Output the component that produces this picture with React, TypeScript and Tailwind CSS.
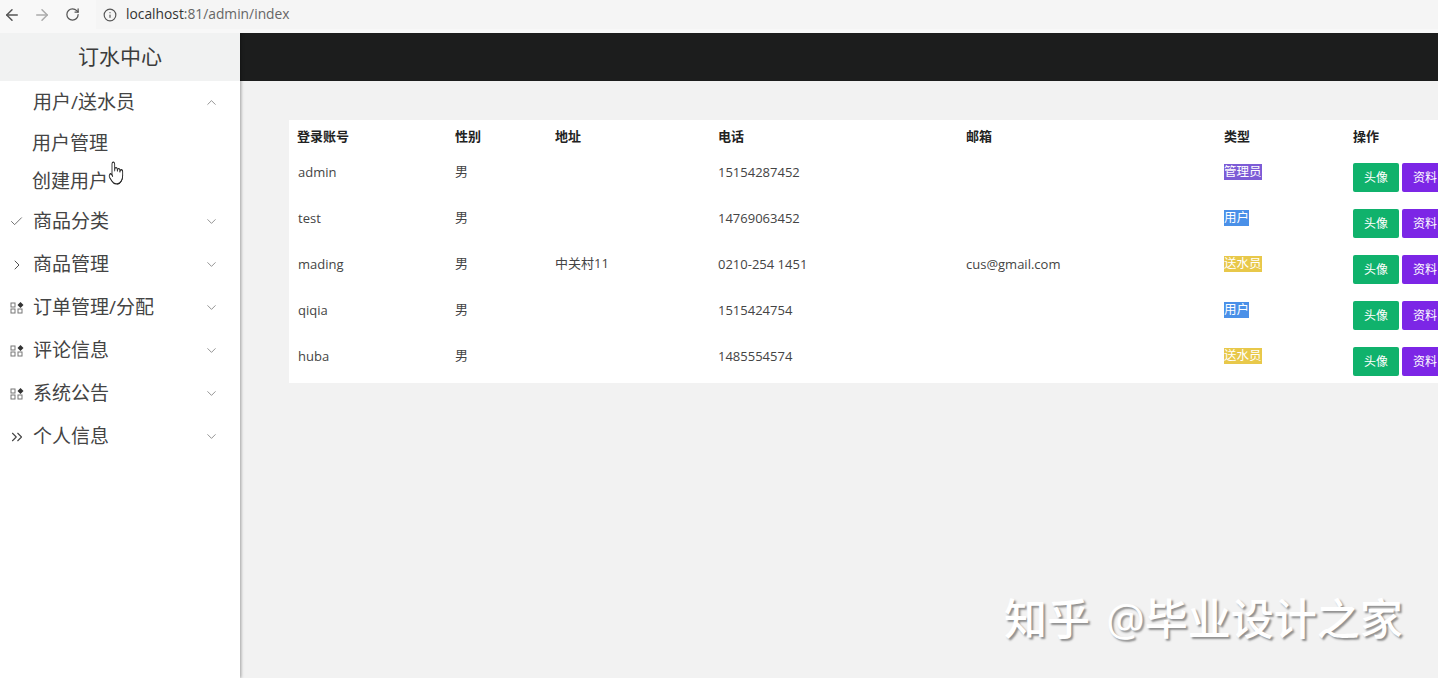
import { ArrowLeft, ArrowRight, Check, ChevronDown, ChevronRight, ChevronUp, ChevronsRight, Info, Pointer, RotateCw } from "lucide-react";
import type { ReactNode } from "react";

const font = "font-['Open_Sans','Noto_Sans_CJK_SC',sans-serif]";

function GridIcon() {
  return (
    <svg width="14" height="14" viewBox="0 0 14 14" fill="none" stroke="#777" strokeWidth="1">
      <rect x="1" y="2" width="4" height="4" />
      <rect x="1" y="8" width="4" height="4" />
      <rect x="8" y="8" width="4" height="4" />
      <path d="M10.5 1 13.5 4l-3 3-3-3z" fill="#333" stroke="none" />
    </svg>
  );
}

function NavItem({ icon, label, open }: { icon?: ReactNode; label: string; open?: boolean }) {
  return (
    <div className="flex h-[43px] items-center">
      <div className="flex w-[33px] justify-center text-[#444]">{icon}</div>
      <span className="flex-1 text-[19px] text-[#444]">{label}</span>
      {open ? (
        <ChevronUp size={15} strokeWidth={1} className="mr-[21px] text-[#555]" />
      ) : (
        <ChevronDown size={15} strokeWidth={1} className="mr-[21px] text-[#555]" />
      )}
    </div>
  );
}

const rows = [
  { name: "admin", addr: "", phone: "15154287452", mail: "", type: "管理员", color: "bg-[#7c5bd6]" },
  { name: "test", addr: "", phone: "14769063452", mail: "", type: "用户", color: "bg-[#4a90e8]" },
  { name: "mading", addr: "中关村11", phone: "0210-254 1451", mail: "cus@gmail.com", type: "送水员", color: "bg-[#e8c84a]" },
  { name: "qiqia", addr: "", phone: "1515424754", mail: "", type: "用户", color: "bg-[#4a90e8]" },
  { name: "huba", addr: "", phone: "1485554574", mail: "", type: "送水员", color: "bg-[#e8c84a]" },
];

const heads = ["登录账号", "性别", "地址", "电话", "邮箱", "类型", "操作"];

export default function App() {
  return (
    <div className={`flex h-[678px] w-[1438px] flex-col overflow-hidden bg-white ${font}`}>
      {/* browser bar */}
      <div className="flex h-[33px] items-center bg-[#f8f8f8] pb-[4px]">
        <ArrowLeft size={18} className="ml-[3px] text-[#555]" />
        <ArrowRight size={18} className="ml-[12px] text-[#aaa]" />
        <RotateCw size={15} className="ml-[14px] text-[#555]" />
        <div className="ml-[16px] flex h-[29px] flex-1 items-center bg-[#f5f5f5] pl-[7px]">
          <Info size={14} className="text-[#555]" />
          <span className="ml-[9px] text-[13.8px] text-[#666]">
            <span className="text-[#333]">localhost</span>:81/admin/index
          </span>
        </div>
      </div>

      <div className="flex flex-1 overflow-hidden">
        {/* sidebar */}
        <aside className="z-10 w-[240px] shrink-0 bg-white shadow-[1px_0_3px_rgba(0,0,0,0.35)]">
          <div className="flex h-[48px] items-center justify-center bg-[#f1f2f2] text-[21px] text-[#3c3c3c]">订水中心</div>
          <NavItem label="用户/送水员" open />
          <div className="flex h-[38px] items-center pl-[32px] text-[19px] text-[#444]">用户管理</div>
          <div className="flex h-[38px] items-center pl-[32px] text-[19px] text-[#444]">创建用户</div>
          <NavItem icon={<Check size={15} strokeWidth={1.2} />} label="商品分类" />
          <NavItem icon={<ChevronRight size={16} strokeWidth={1.4} />} label="商品管理" />
          <NavItem icon={<GridIcon />} label="订单管理/分配" />
          <NavItem icon={<GridIcon />} label="评论信息" />
          <NavItem icon={<GridIcon />} label="系统公告" />
          <NavItem icon={<ChevronsRight size={18} strokeWidth={1.5} />} label="个人信息" />
        </aside>

        {/* main */}
        <main className="relative flex min-w-0 flex-1 flex-col overflow-hidden bg-[#f2f2f2]">
          <div className="h-[48px] shrink-0 bg-[#1c1d1d]" />
          <div className="pl-[49px] pt-[39px]">
            <table className="w-[1200px] table-fixed border-collapse bg-white text-left text-[13px] text-[#444]">
              <colgroup>
                <col className="w-[158px]" />
                <col className="w-[100px]" />
                <col className="w-[163px]" />
                <col className="w-[248px]" />
                <col className="w-[258px]" />
                <col className="w-[129px]" />
                <col />
              </colgroup>
              <thead>
                <tr className="h-[33px]">
                  {heads.map((h) => (
                    <th key={h} className="pl-[8px] font-semibold text-[#222]">
                      {h}
                    </th>
                  ))}
                </tr>
              </thead>
              <tbody>
                {rows.map((r) => (
                  <tr key={r.name} className="h-[46px] align-top">
                    <td className="pl-[9px] pt-[10px]">{r.name}</td>
                    <td className="pl-[8px] pt-[9px]">男</td>
                    <td className="pl-[8px] pt-[9px]">{r.addr}</td>
                    <td className="pl-[8px] pt-[10px]">{r.phone}</td>
                    <td className="pl-[8px] pt-[10px]">{r.mail}</td>
                    <td className="pl-[8px] pt-[9px]">
                      <span className={`inline-block h-[16px] text-[12.5px] leading-[16px] text-white ${r.color}`}>{r.type}</span>
                    </td>
                    <td className="pl-[8px] pt-[10px]">
                      <div className="flex gap-[3px] text-[12px] text-white">
                        <button className="h-[29px] w-[46px] rounded-[2px] bg-[#10b26c]">头像</button>
                        <button className="h-[29px] w-[46px] rounded-[2px] bg-[#7c26e6]">资料</button>
                      </div>
                    </td>
                  </tr>
                ))}
              </tbody>
            </table>
          </div>
        </main>
      </div>

      {/* cursor over the menu */}
      <Pointer strokeWidth={1.3} fill="white" preserveAspectRatio="none" className="absolute left-[108px] top-[160px] z-20 h-[26px] w-[16px] text-[#222]" />

      {/* watermark */}
      <div className="absolute left-[1004px] top-[590px] z-20 text-[43px] font-medium leading-[58px] text-white [text-shadow:2px_2px_2px_#8f8f8f]">
        <span className="mr-[5px]">知乎</span> @毕业设计之家
      </div>
    </div>
  );
}
